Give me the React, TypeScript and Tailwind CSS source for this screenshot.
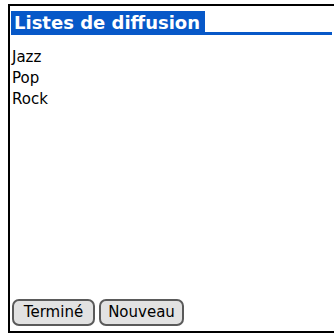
import React from 'react';

const items = ['Jazz', 'Pop', 'Rock'];

function PalmButton({ label, width }: { label: string; width: string }) {
  return (
    <button className={`${width} h-[27px] rounded-[7px] border-2 border-[#5a5a5a] bg-[#e2e2e2] text-black text-[15px] leading-none flex items-center justify-center`}>
      {label}
    </button>
  );
}

export default function App() {
  return (
    <div className="w-full h-[334px] bg-white pl-[8px] pt-[4px] overflow-hidden" style={{ fontFamily: '"DejaVu Sans", sans-serif' }}>
      {/* frame: black on left, top and bottom; right side runs off screen */}
      <div className="w-[340px] h-[329px] border-l-2 border-t-2 border-b-2 border-black flex flex-col pt-[5px]">
        {/* title tab */}
        <div className="w-[322px] flex flex-col pl-[1px]">
          <div className="w-[194px] h-[21px] bg-[#0758c8] text-white font-bold text-[18px] leading-none flex items-center pl-[3px] pt-[2px]">
            Listes de diffusion
          </div>
          <div className="h-[3px] bg-[#0758c8] w-full"></div>
        </div>

        {/* list */}
        <div className="flex-1 flex flex-col pt-[12px] pl-[2px] text-[15px] leading-[21px] text-black">
          {items.map((it) => (
            <div key={it}>{it}</div>
          ))}
        </div>

        {/* buttons */}
        <div className="flex gap-[4px] pl-[2px] pb-[5px]">
          <PalmButton label="Terminé" width="w-[83px]" />
          <PalmButton label="Nouveau" width="w-[85px]" />
        </div>
      </div>
    </div>
  );
}
